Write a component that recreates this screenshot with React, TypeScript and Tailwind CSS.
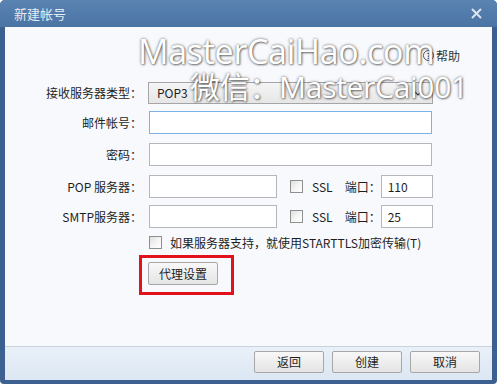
import React from 'react';

const font = "font-['Noto_Sans_CJK_SC','Noto_Sans',sans-serif]";

const Input: React.FC<{ w?: string; value?: string; focused?: boolean }> = ({ w = 'w-[283px]', value, focused }) => (
  <div
    className={`${w} h-[23px] bg-white border ${focused ? 'border-[#7db2e6]' : 'border-[#b4b6bb]'} flex items-center px-[6px] text-[12px] text-[#1e1e1e]`}
  >
    {value}
  </div>
);

const Checkbox: React.FC = () => (
  <div className="w-[13px] h-[13px] border border-[#8e8f8f] bg-gradient-to-br from-[#dedede] via-[#f4f4f4] to-[#ffffff] shrink-0" />
);

const Btn: React.FC<{ text: string }> = ({ text }) => (
  <div className="w-[70px] h-[22px] border border-[#a7a7a7] rounded-[2px] bg-gradient-to-b from-[#f8f8f8] to-[#e4e4e4] flex items-center justify-center text-[12px] text-[#1e1e1e]">
    {text}
  </div>
);

const Label: React.FC<{ text: string }> = ({ text }) => (
  <div className="w-[138px] text-right text-[12px] text-[#1e1e1e] pr-[1px] mr-[6px]">{text}</div>
);

const ServerRow: React.FC<{ label: string; port: string; mt: string }> = ({ label, port, mt }) => (
  <div className={`flex items-center ${mt}`}>
    <Label text={label} />
    <Input w="w-[128px]" />
    <div className="ml-[13px]">
      <Checkbox />
    </div>
    <span className="ml-[9px] text-[12px] text-[#1e1e1e]">SSL</span>
    <span className="ml-[12px] w-[36px] text-[12px] text-[#1e1e1e]">端口：</span>
    <Input w="w-[52px]" value={port} />
  </div>
);

export default function App() {
  return (
    <div className={`w-[497px] h-[384px] bg-[#3c6190] rounded-t-[5px] rounded-b-[4px] flex flex-col ${font}`}>
      {/* title bar */}
      <div className="h-[27px] shrink-0 flex items-center justify-between pl-[14px] pr-[15px] rounded-t-[5px] bg-gradient-to-b from-[#5a83b2] to-[#4a74a4]">
        <span className="text-[13px] text-[#e4ebf3]">新建帐号</span>
        <svg width="11" height="11" viewBox="0 0 11 11">
          <path d="M1 1L10 10M10 1L1 10" stroke="#dbe5f0" strokeWidth="2" />
        </svg>
      </div>

      <div className="flex-1 mx-[5px] flex flex-col bg-[#f8f9fc]">
        {/* main area */}
        <div className="relative flex-1 flex flex-col">
          <div className="flex justify-end pr-[32px] pt-[22px] h-[35px] items-start">
            <div className="flex items-center gap-[2px] text-[12px] text-[#333] leading-[13px]">
              <span className="w-[11px] h-[11px] rounded-full border border-[#555] flex items-center justify-center text-[8px] leading-none">?</span>
              <span>帮助</span>
            </div>
          </div>

          <div className="flex flex-col mt-[20px]">
            <div className="flex items-center h-[22px]">
              <div className="w-[138px] text-right text-[12px] text-[#1e1e1e] pr-[1px] mr-[5px]">接收服务器类型：</div>
              <div className="w-[285px] h-[22px] border border-[#a5a5a5] bg-gradient-to-b from-[#f5f5f5] to-[#e6e6e6] flex items-center justify-between pl-[8px] pr-[10px] text-[12px] text-[#1e1e1e]">
                <span>POP3</span>
                <svg width="8" height="5" viewBox="0 0 8 5">
                  <path d="M0.5 0.5L4 4L7.5 0.5" stroke="#444" fill="none" strokeWidth="1.2" />
                </svg>
              </div>
            </div>
            <div className="flex items-center mt-[7px]">
              <Label text="邮件帐号：" />
              <Input focused />
            </div>
            <div className="flex items-center mt-[9px]">
              <Label text="密码：" />
              <Input />
            </div>
            <ServerRow label="POP 服务器：" port="110" mt="mt-[9px]" />
            <ServerRow label="SMTP服务器：" port="25" mt="mt-[7px]" />
            <div className="flex items-center gap-[8px] mt-[8px] ml-[144px] h-[13px]">
              <Checkbox />
              <span className="text-[12px] text-[#1e1e1e]">如果服务器支持，就使用STARTTLS加密传输(T)</span>
            </div>
            <div className="mt-[6px] ml-[134px] w-[95px] h-[40px] border-[3px] border-[#e3111b] pl-[6px] pt-[4px]">
              <div className="w-[70px] h-[23px] border border-[#a7a7a7] rounded-[2px] bg-gradient-to-b from-[#f8f8f8] to-[#e4e4e4] flex items-center justify-center text-[12px] text-[#1e1e1e]">
                代理设置
              </div>
            </div>
          </div>

          {/* watermark */}
          <div className="absolute left-[133px] top-[4px] pointer-events-none font-['Open_Sans',sans-serif] font-[400] text-white [text-shadow:0_0_3px_rgba(0,0,0,0.6),1px_1px_2px_rgba(0,0,0,0.4)]">
            <div className="text-[34px] leading-[40px] tracking-[-0.3px]">MasterCaiHao.com</div>
            <div className="text-[30px] leading-[32px] ml-[52px] -mt-[2px] tracking-[-0.3px]">
              <span className="font-['Noto_Sans_CJK_SC',sans-serif] font-[400]">微信：</span>MasterCai001
            </div>
          </div>
        </div>

        {/* footer */}
        <div className="h-[34px] shrink-0 border-t border-[#c9d3de] bg-gradient-to-b from-[#e9f0f8] to-[#dce7f3] flex items-start justify-end gap-[8px] pt-[4px] pr-[12px]">
          <Btn text="返回" />
          <Btn text="创建" />
          <Btn text="取消" />
        </div>
      </div>
      <div className="h-[4px] shrink-0" />
    </div>
  );
}
